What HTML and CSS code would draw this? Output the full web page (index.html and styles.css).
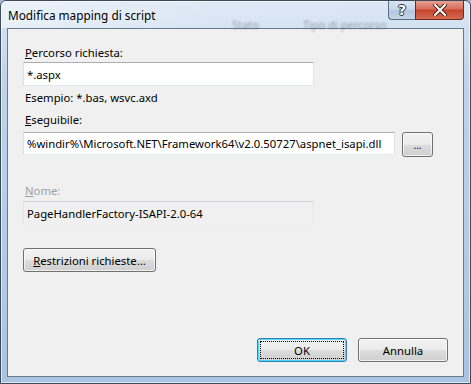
FILE: index.html
```html
<!DOCTYPE html>
<html lang="it">
<head>
  <meta charset="UTF-8">
  <title>Modifica mapping di script</title>
  <link rel="stylesheet" href="styles.css">
</head>
<body>
  <div class="window">
    <div class="titlebar">
      <span class="ghost ghost-stato">Stato</span>
      <span class="ghost ghost-tipo">Tipo di percorso</span>
      <span class="title">Modifica mapping di script</span>
      <div class="caption-buttons">
        <button class="cap help">?</button>
        <button class="cap close">
          <svg width="14" height="12" viewBox="0 0 14 12">
            <path d="M2 1 L12 11 M12 1 L2 11" stroke="#4a2218" stroke-width="4" stroke-linecap="square"/>
            <path d="M2 1 L12 11 M12 1 L2 11" stroke="#ffffff" stroke-width="2" stroke-linecap="square"/>
          </svg>
        </button>
      </div>
    </div>

    <div class="client">
      <div class="field-label"><u>P</u>ercorso richiesta:</div>
      <input type="text" class="textbox path-short" value="*.aspx">
      <div class="hint">Esempio: *.bas, wsvc.axd</div>

      <div class="field-label exe-label"><u>E</u>seguibile:</div>
      <div class="exe-row">
        <input type="text" class="textbox path-long" value="%windir%\Microsoft.NET\Framework64\v2.0.50727\aspnet_isapi.dll">
        <button class="btn browse">...</button>
      </div>

      <div class="field-label disabled name-label"><u>N</u>ome:</div>
      <input type="text" class="textbox path-short readonly" value="PageHandlerFactory-ISAPI-2.0-64" readonly>

      <button class="btn restrict"><u>R</u>estrizioni richieste...</button>

      <div class="footer">
        <button class="btn default"><span class="focus">OK</span></button>
        <button class="btn">Annulla</button>
      </div>
    </div>
  </div>
</body>
</html>
```

FILE: styles.css
```css
* {
  box-sizing: border-box;
}

body {
  margin: 0;
  font-family: "Noto Sans", "Open Sans", sans-serif;
  font-size: 11.3px;
  color: #000;
  background: #9fb9d6;
}

.window {
  position: relative;
  width: 471px;
  height: 384px;
  border: 1px solid #3c4a5a;
  border-radius: 6px 6px 0 0;
  background: linear-gradient(180deg, #d9e6f4 0%, #bfd4ea 20%, #b5cce6 60%, #a9c3e0 100%);
  box-shadow: inset 0 0 0 1px rgba(255, 255, 255, 0.6);
  overflow: hidden;
}

.titlebar {
  position: relative;
  height: 27px;
  display: flex;
  align-items: center;
  background: linear-gradient(90deg, rgba(255, 255, 255, 0.5) 0%, rgba(255, 255, 255, 0.15) 45%, rgba(255, 255, 255, 0.05) 100%);
}

.title {
  position: relative;
  padding-left: 7px;
  padding-top: 1px;
  font-size: 11.8px;
  color: #000;
  text-shadow: 0 0 8px rgba(255, 255, 255, 0.9);
}

.ghost {
  position: absolute;
  top: 16px;
  font-size: 11px;
  color: rgba(60, 70, 85, 0.45);
  filter: blur(1.2px);
}

.ghost-stato {
  left: 231px;
}

.ghost-tipo {
  left: 302px;
}

.caption-buttons {
  position: absolute;
  top: -1px;
  right: 6px;
  display: flex;
}

.cap {
  height: 20px;
  margin: 0;
  padding: 0;
  border: 1px solid #596b80;
  border-top: none;
  display: flex;
  align-items: center;
  justify-content: center;
  font-family: "DejaVu Sans", sans-serif;
}

.help {
  width: 27px;
  border-radius: 0 0 0 4px;
  border-right: none;
  background: linear-gradient(180deg, #dbe6f2 0%, #c8d7e8 50%, #b2c6dc 51%, #c4d5e8 100%);
  color: #fff;
  font-weight: bold;
  font-size: 14px;
  text-shadow: 0 0 1px #2b3440, 1px 0 0 #2b3440, -1px 0 0 #2b3440, 0 1px 0 #2b3440, 0 -1px 0 #2b3440;
}

.close {
  width: 49px;
  border-radius: 0 0 4px 0;
  border-color: #6d2a22;
  background: linear-gradient(180deg, #e8a597 0%, #d9705e 45%, #c7452f 55%, #d46b4f 100%);
}

.client {
  display: flex;
  flex-direction: column;
  align-items: flex-start;
  height: 349px;
  margin: 0 6px 0 6px;
  padding: 16px 15px 14px 15px;
  border: 1px solid #687a8f;
  background: #f0f0f0;
}

.field-label {
  height: 15px;
  line-height: 15px;
  padding-left: 2px;
}

.field-label.disabled {
  color: #a0a0a0;
}

.textbox {
  height: 24px;
  margin: 2px 0 0;
  padding: 0 3px;
  font: inherit;
  color: #000;
  background: #fff;
  border: 1px solid #abadb3;
  border-color: #abadb3 #e2e3ea #e3e9ef #dbdfe6;
  outline: none;
}

.path-short {
  width: 291px;
}

.path-long {
  width: 372px;
  height: 23px;
  margin: 0;
}

.readonly {
  margin-top: 3px;
  background: #f0f0f0;
  border: 1px solid #d9d9d9;
  border-color: #cfd1d6 #e6e7ea #eceef0 #e1e3e7;
}

.hint {
  height: 15px;
  line-height: 15px;
  margin-top: 4px;
  padding-left: 2px;
}

.exe-label {
  margin-top: 7px;
}

.exe-row {
  display: flex;
  gap: 7px;
  margin-top: 5px;
}

.name-label {
  margin-top: 26px;
}

.btn {
  height: 24px;
  margin: 0;
  padding: 0 8px;
  font: inherit;
  color: #000;
  white-space: nowrap;
  border: 1px solid #707070;
  border-radius: 3px;
  background: linear-gradient(180deg, #f2f2f2 0%, #ebebeb 50%, #dddddd 51%, #cfcfcf 100%);
  box-shadow: inset 0 0 0 1px rgba(255, 255, 255, 0.7);
}

.browse {
  width: 31px;
  height: 25px;
  padding: 0;
  font-size: 10px;
  line-height: 1;
}

.restrict {
  width: 133px;
  margin-top: 23px;
  padding: 0;
}

.footer {
  display: flex;
  gap: 11px;
  margin-top: auto;
  align-self: flex-end;
}

.footer .btn {
  width: 90px;
}

.default {
  padding: 2px;
  border-color: #3c7fb1;
  box-shadow: inset 0 0 0 1px #48d7fc;
}

.focus {
  display: flex;
  align-items: center;
  justify-content: center;
  height: 100%;
  border: 1px dotted #000;
}
```
